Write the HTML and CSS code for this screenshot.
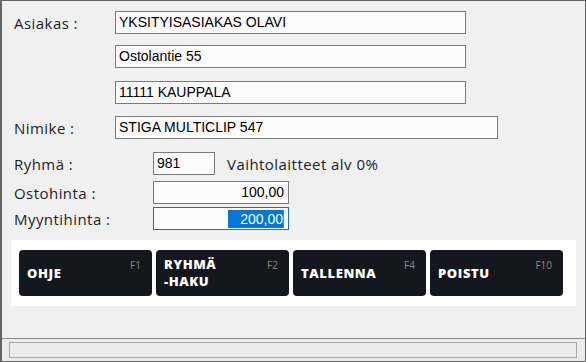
FILE: index.html
```html
<!DOCTYPE html>
<html lang="fi">
<head>
<meta charset="utf-8">
<link rel="stylesheet" href="styles.css">
</head>
<body>
<div class="window">
  <div class="main">
    <div class="row r1">
      <div class="label wide">Asiakas :</div>
      <div class="field f-addr">YKSITYISASIAKAS OLAVI</div>
    </div>
    <div class="row r2">
      <div class="label wide"></div>
      <div class="field f-addr">Ostolantie 55</div>
    </div>
    <div class="row r3">
      <div class="label wide"></div>
      <div class="field f-addr">11111 KAUPPALA</div>
    </div>
    <div class="row r4">
      <div class="label wide">Nimike :</div>
      <div class="field f-name">STIGA MULTICLIP 547</div>
    </div>
    <div class="row r5">
      <div class="label narrow">Ryhmä :</div>
      <div class="field f-group">981</div>
      <div class="group-name">Vaihtolaitteet alv 0%</div>
    </div>
    <div class="row r6">
      <div class="label narrow">Ostohinta :</div>
      <div class="field f-price num">100,00</div>
    </div>
    <div class="row r7">
      <div class="label narrow">Myyntihinta :</div>
      <div class="field f-price num focused"><span class="sel">200,00</span><span class="caret"></span></div>
    </div>
    <div class="actions">
      <div class="btn"><span class="btn-text">OHJE</span><span class="key">F1</span></div>
      <div class="btn"><span class="btn-text">RYHMÄ<br>-HAKU</span><span class="key">F2</span></div>
      <div class="btn"><span class="btn-text">TALLENNA</span><span class="key">F4</span></div>
      <div class="btn"><span class="btn-text">POISTU</span><span class="key">F10</span></div>
    </div>
  </div>
  <div class="status">
    <div class="status-box"></div>
  </div>
</div>
</body>
</html>
```
FILE: styles.css
```css
* { box-sizing: border-box; }
html, body { margin: 0; padding: 0; background: #f0f0f0; }
.window {
  width: 586px;
  height: 362px;
  border: 1px solid #646464;
  border-left-width: 2px;
  background: #f0f0f0;
  display: flex;
  flex-direction: column;
}
.main {
  height: 338px;
  border-bottom: 1px solid #8c8c8c;
  padding: 10px 0 0 9px;
}
.row {
  display: flex;
  align-items: center;
  height: 23px;
}
.r2 { margin-top: 11px; }
.r3 { margin-top: 13px; }
.r4 { margin-top: 12px; }
.r5 { margin-top: 13px; }
.r6 { margin-top: 6px; }
.r7 { margin-top: 3px; }
.label, .group-name {
  font-family: "Open Sans", "DejaVu Sans", sans-serif;
  font-size: 15px;
  letter-spacing: 0.45px;
  color: #1e1e1e;
}
.label {
  padding-left: 3px;
  padding-top: 1px;
  flex: none;
}
.label.wide { width: 104px; }
.label.narrow { width: 142px; }
.field {
  height: 23px;
  border: 1px solid #7a7a7a;
  background: #fbfbfb;
  font-family: "Liberation Sans", Arial, sans-serif;
  font-size: 14px;
  color: #000;
  line-height: 21px;
  padding: 0 4px 0 3px;
  white-space: nowrap;
  overflow: hidden;
}
.f-addr { width: 351px; }
.f-name { width: 383px; }
.f-group { width: 62px; }
.f-price { width: 136px; }
.num { text-align: right; padding-right: 4px; }
.focused {
  border-color: #1a6fc4;
  display: flex;
  justify-content: flex-end;
  align-items: center;
}
.sel {
  background: #0078d7;
  color: #fff;
  line-height: 18px;
  padding-left: 12px;
}
.caret {
  width: 1px;
  height: 18px;
  background: #d06a10;
}
.group-name {
  margin-left: 12px;
  padding-top: 1px;
}
.actions {
  margin-top: 10px;
  width: 565px;
  height: 66px;
  background: #ffffff;
  padding: 10px 8px;
  display: flex;
  gap: 4px;
}
.btn {
  position: relative;
  width: 133px;
  height: 46px;
  background: #14171d;
  border-radius: 4px;
  display: flex;
  align-items: center;
  padding-left: 8px;
}
.btn-text {
  font-family: "Open Sans", "DejaVu Sans", sans-serif;
  font-weight: 800;
  font-size: 13px;
  line-height: 17px;
  color: #ffffff;
  letter-spacing: 0.6px;
}
.key {
  position: absolute;
  top: 9px;
  right: 11px;
  font-family: "Open Sans", "DejaVu Sans", sans-serif;
  font-size: 10px;
  color: #8a8a8a;
  line-height: 12px;
}
.status {
  flex: 1;
  background: #ececec;
  padding: 3px 8px 0 7px;
}
.status-box {
  height: 16px;
  border: 1px solid #a8a8a8;
  background: #ececec;
}
```
